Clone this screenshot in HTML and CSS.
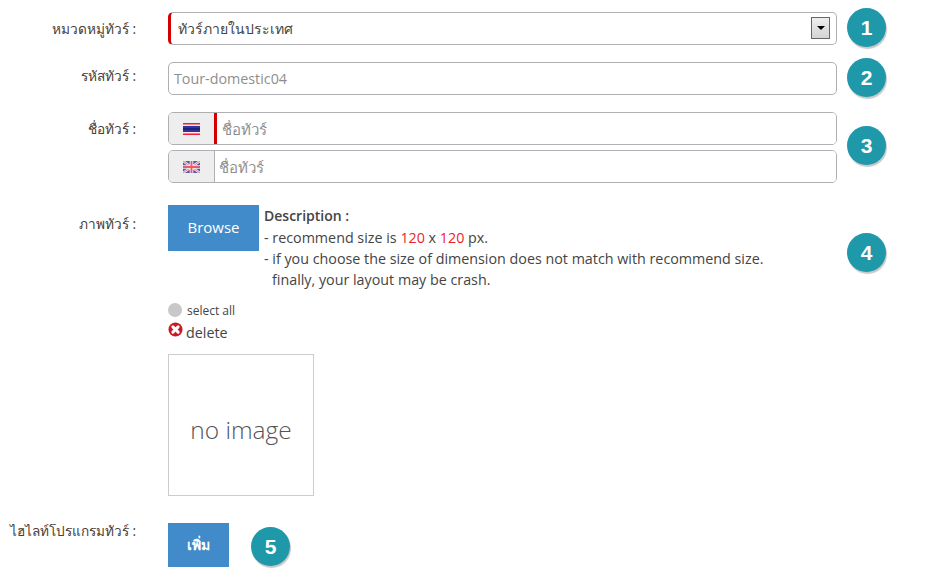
FILE: index.html
```html
<!DOCTYPE html>
<html lang="th">
<head>
<meta charset="utf-8">
<title>ทัวร์</title>
<link rel="stylesheet" href="styles.css">
</head>
<body>
<form class="form">
  <div class="row row-cat">
    <label class="label">หมวดหมู่ทัวร์ :</label>
    <div class="select-wrap">
      <select class="select"><option>ทัวร์ภายในประเทศ</option></select>
      <span class="select-btn"><span class="select-arrow"></span></span>
    </div>
    <span class="badge">1</span>
  </div>
  <div class="row row-code">
    <label class="label">รหัสทัวร์ :</label>
    <input class="input" type="text" placeholder="Tour-domestic04">
    <span class="badge">2</span>
  </div>
  <div class="row row-name">
    <label class="label">ชื่อทัวร์ :</label>
    <div class="stack">
      <div class="group">
        <span class="addon">
          <svg class="flag" viewBox="0 0 17 12"><rect width="17" height="12" fill="#f02030"/><rect y="1.5" width="17" height="9" fill="#f4e8ee"/><rect y="3" width="17" height="6" fill="#33339a"/><rect y="5" width="17" height="2" fill="#20207a"/></svg>
        </span>
        <input class="group-input required" type="text" placeholder="ชื่อทัวร์">
      </div>
      <div class="group">
        <span class="addon">
          <svg class="flag" viewBox="0 0 17 12"><rect width="17" height="12" fill="#4a5aa8"/><path d="M0 0L17 12M17 0L0 12" stroke="#f0e4ea" stroke-width="2.4"/><path d="M0 0L17 12M17 0L0 12" stroke="#e06a80" stroke-width=".8"/><path d="M8.5 0V12M0 6H17" stroke="#f6eef0" stroke-width="3.6"/><path d="M8.5 0V12M0 6H17" stroke="#ea5a6a" stroke-width="1.8"/></svg>
        </span>
        <input class="group-input" type="text" placeholder="ชื่อทัวร์">
      </div>
    </div>
    <span class="badge">3</span>
  </div>
  <div class="row row-image">
    <label class="label">ภาพทัวร์ :</label>
    <div class="image-col">
      <div class="upload">
        <button class="browse" type="button">Browse</button>
        <div class="desc">
          <strong class="desc-title">Description :</strong>
          <div>- recommend size is <span class="red">120</span> x <span class="red">120</span> px.</div>
          <div>- if you choose the size of dimension does not match with recommend size.</div>
          <div class="indent">finally, your layout may be crash.</div>
        </div>
      </div>
      <div class="select-all"><span class="dot"></span><span>select all</span></div>
      <div class="delete">
        <svg class="del-icon" viewBox="0 0 16 16"><circle cx="8" cy="8" r="7.5" fill="#cc1a24"/><path d="M5.2 5.2L10.8 10.8M10.8 5.2L5.2 10.8" stroke="#fff" stroke-width="3.2" stroke-linecap="round"/></svg>
        <span>delete</span>
      </div>
      <div class="noimage">no image</div>
    </div>
    <span class="badge">4</span>
  </div>
  <div class="row row-highlight">
    <label class="label">ไฮไลท์โปรแกรมทัวร์ :</label>
    <div class="add-col">
      <button class="add" type="button">เพิ่ม</button>
      <span class="badge">5</span>
    </div>
  </div>
</form>
</body>
</html>
```
FILE: styles.css
```css
* { box-sizing: border-box; }
html, body { margin: 0; padding: 0; background: #fff; }
body {
  width: 946px;
  height: 580px;
  overflow: hidden;
  font-family: "Open Sans", "Noto Sans", sans-serif;
  font-size: 14.3px;
  color: #444;
}
.form { padding-top: 12px; }
.row {
  display: grid;
  grid-template-columns: 136px 669px 40px;
  column-gap: 32px;
  align-items: start;
}
.row .badge { margin-left: -22px; }
.label {
  text-align: right;
  font-size: 13.7px;
  line-height: 20px;
  color: #4a4038;
}
.row-cat .label { margin-top: 7px; }
.row-code { margin-top: 15px; }
.row-code .label { margin-top: 4px; }
.row-name { margin-top: 15px; }
.row-name .label { margin-top: 7px; }
.row-image { margin-top: 22px; }
.row-image .label { margin-top: 9px; }
.row-highlight { margin-top: 27px; }
.row-highlight .label { margin-top: -2px; white-space: nowrap; font-size: 13.6px; }

.select-wrap { position: relative; height: 33px; }
.select {
  display: block;
  width: 100%;
  height: 33px;
  appearance: none;
  -webkit-appearance: none;
  background: #fff;
  border: 1px solid #b0afb4;
  border-left: 3px solid #d40000;
  border-radius: 5px;
  padding: 0 0 0 7px;
  font: 14px "Open Sans", sans-serif;
  color: #444;
}
.select-btn {
  position: absolute;
  left: 643px;
  top: 5px;
  width: 19px;
  height: 22px;
  border: 1px solid #666;
  background: linear-gradient(#eee, #d4d4d4);
  display: flex;
  justify-content: center;
  padding-top: 8px;
}
.select-arrow {
  width: 0;
  height: 0;
  border-left: 4px solid transparent;
  border-right: 4px solid transparent;
  border-top: 4px solid #000;
}
.input {
  display: block;
  width: 100%;
  height: 33px;
  border: 1px solid #b0afb4;
  border-radius: 5px;
  padding: 0 5px;
  font: 14.3px "Open Sans", sans-serif;
  color: #444;
  outline: none;
}
input::placeholder { color: #8f8f8f; opacity: 1; }

.stack { display: flex; flex-direction: column; gap: 5px; }
.group {
  display: flex;
  height: 33px;
  border: 1px solid #b0afb4;
  border-radius: 5px;
  overflow: hidden;
}
.addon {
  width: 46px;
  flex: none;
  background: #eee;
  border-right: 1px solid #b0afb4;
  display: flex;
  align-items: center;
  justify-content: center;
}
.flag { width: 17px; height: 12px; display: block; filter: blur(.3px); }
.group-input {
  flex: 1;
  min-width: 0;
  border: 0;
  padding: 0 4px;
  font: 15px "Open Sans", sans-serif;
  outline: none;
}
.group-input.required { border-left: 3px solid #d40000; padding-left: 5px; margin-left: -1px; }
.row-name .badge { margin-top: 14px; }
.row-cat .badge { margin-top: -4px; }
.row-code .badge { margin-top: -4px; }
.row-image .badge { margin-top: 28px; }

.upload { display: flex; }
.browse {
  width: 91px;
  height: 46px;
  flex: none;
  border: 0;
  padding: 0 0 2px;
  background: #428bca;
  color: #fff;
  font: 15px "Open Sans", sans-serif;
}
.desc { margin-left: 5px; line-height: 21px; color: #444; }
.desc-title { display: block; font-weight: 600; font-size: 14px; line-height: 22px; }
.red { color: #f01c2c; }
.indent { padding-left: 8px; }
.select-all {
  display: flex;
  align-items: center;
  margin-top: 10px;
  height: 20px;
  font-size: 12px;
  color: #444;
}
.dot {
  width: 14px;
  height: 14px;
  border-radius: 50%;
  background: #c8c8c8;
  margin-right: 5px;
}
.delete { display: flex; height: 24px; align-items: center; }
.del-icon { width: 15px; height: 15px; margin-right: 3px; margin-top: -5px; }
.noimage {
  width: 146px;
  height: 142px;
  margin-top: 10px;
  padding-top: 8px;
  border: 1px solid #ccc;
  display: flex;
  align-items: center;
  justify-content: center;
  font-size: 24.5px;
  font-weight: 300;
  color: #555;
}
.add-col { display: flex; align-items: flex-start; }
.add {
  width: 61px;
  height: 44px;
  border: 0;
  background: #428bca;
  color: #fff;
  font: 600 14px "Open Sans", sans-serif;
}
.row .add-col .badge { margin-left: 22px; margin-top: 4px; }
.badge {
  width: 39px;
  height: 39px;
  border-radius: 50%;
  background: #1f98aa;
  color: #fff;
  box-shadow: 1px 2px 1px #c8c8c8;
  display: flex;
  align-items: center;
  justify-content: center;
  font: bold 21px "Liberation Sans", sans-serif;
}
```
